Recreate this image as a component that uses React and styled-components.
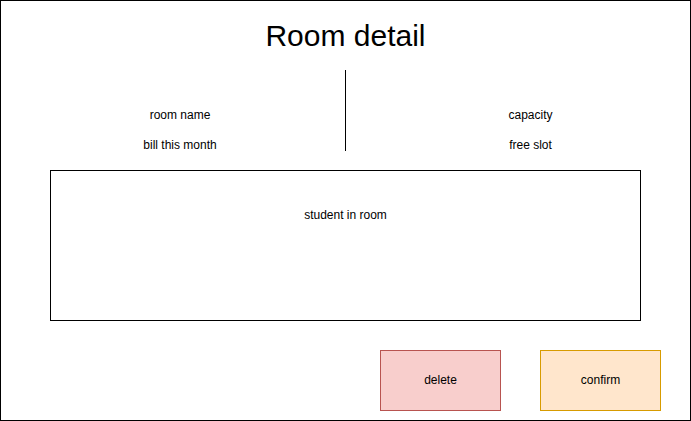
import React from "react";
import styled, { createGlobalStyle } from "styled-components";

const GlobalStyle = createGlobalStyle`
  *, *::before, *::after { box-sizing: border-box; }
  body {
    margin: 0;
    background: #ffffff;
    color: #000000;
    font-family: "Liberation Sans", Arial, sans-serif;
    font-size: 12px;
    line-height: 14px;
  }
`;

const Page = styled.main`
  display: flex;
  flex-direction: column;
  min-height: 100vh;
  border: 1px solid #000000;
  padding: 17px 29px 9px 49px;
`;

const Title = styled.h1`
  margin: 0 20px 16px 0;
  font-size: 30px;
  font-weight: 400;
  line-height: 36px;
  text-align: center;
`;

const Summary = styled.section`
  display: grid;
  grid-template-columns: 1fr 1px 1fr;
  margin: 0 20px 19px 0;
`;

const Divider = styled.div`
  background: #000000;
`;

const Facts = styled.ul`
  display: flex;
  flex-direction: column;
  gap: 18px;
  margin: 0;
  padding: 39px 0 0;
  list-style: none;
  line-height: 12px;
  text-align: center;
  ${({ $side }) => ($side === "left" ? "padding-right: 35px;" : "padding-left: 74px;")}
`;

const Students = styled.section`
  min-height: 151px;
  margin-right: 20px;
  border: 1px solid #000000;
  padding-top: 37px;
  text-align: center;
`;

const StudentsLabel = styled.h2`
  margin: 0;
  font-size: 12px;
  font-weight: 400;
  line-height: 14px;
`;

const Actions = styled.footer`
  display: flex;
  justify-content: flex-end;
  gap: 39px;
  margin-top: 29px;
`;

const tones = {
  danger: { fill: "#f8cecc", line: "#b85450" },
  accept: { fill: "#ffe6cc", line: "#d79b00" },
};

const ActionButton = styled.button`
  width: 121px;
  height: 61px;
  padding: 0 0 1px;
  border: 1px solid ${({ $tone }) => tones[$tone].line};
  background: ${({ $tone }) => tones[$tone].fill};
  color: #000000;
  font: inherit;
  cursor: pointer;
`;

export default function App() {
  return (
    <>
      <GlobalStyle />
      <Page>
        <Title>Room detail</Title>
        <Summary>
          <Facts $side="left">
            <li>room name</li>
            <li>bill this month</li>
          </Facts>
          <Divider />
          <Facts $side="right">
            <li>capacity</li>
            <li>free slot</li>
          </Facts>
        </Summary>
        <Students>
          <StudentsLabel>student in room</StudentsLabel>
        </Students>
        <Actions>
          <ActionButton type="button" $tone="danger">delete</ActionButton>
          <ActionButton type="button" $tone="accept">confirm</ActionButton>
        </Actions>
      </Page>
    </>
  );
}
